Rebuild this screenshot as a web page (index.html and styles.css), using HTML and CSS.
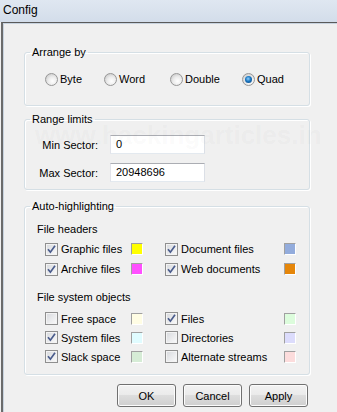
FILE: index.html
```html
<!DOCTYPE html>
<html lang="en">
<head>
  <meta charset="UTF-8" />
  <meta name="viewport" content="width=device-width, initial-scale=1.0"/>
  <title>Config</title>
  <link rel="stylesheet" href="styles.css">
</head>
<body>
  <div class="titlebar">Config</div>
  <div class="client">
    <fieldset class="group">
      <legend>Arrange by</legend>
      <div class="radios">
        <label class="opt"><span class="radio"></span>Byte</label>
        <label class="opt"><span class="radio"></span>Word</label>
        <label class="opt"><span class="radio"></span>Double</label>
        <label class="opt"><span class="radio on"></span>Quad</label>
      </div>
    </fieldset>

    <fieldset class="group range">
      <legend>Range limits</legend>
      <div class="fields">
        <label class="field-label">Min Sector:</label>
        <div class="input">0</div>
        <label class="field-label">Max Sector:</label>
        <div class="input">20948696</div>
      </div>
    </fieldset>

    <fieldset class="group auto">
      <legend>Auto-highlighting</legend>
      <div class="inner">
        <div class="subhead">File headers</div>
        <div class="checks">
          <label class="opt"><span class="cb on"></span>Graphic files</label>
          <span class="swatch" style="background:#ffff00"></span>
          <label class="opt"><span class="cb on"></span>Document files</label>
          <span class="swatch" style="background:#93acdc"></span>
          <label class="opt"><span class="cb on"></span>Archive files</label>
          <span class="swatch" style="background:#ff50ff"></span>
          <label class="opt"><span class="cb on"></span>Web documents</label>
          <span class="swatch" style="background:#e5860a"></span>
        </div>

        <div class="subhead second">File system objects</div>
        <div class="checks fs">
          <label class="opt"><span class="cb"></span>Free space</label>
          <span class="swatch" style="background:#fffde4"></span>
          <label class="opt"><span class="cb on"></span>Files</label>
          <span class="swatch" style="background:#dcfcdc"></span>
          <label class="opt"><span class="cb on"></span>System files</label>
          <span class="swatch" style="background:#e0fcff"></span>
          <label class="opt"><span class="cb"></span>Directories</label>
          <span class="swatch" style="background:#dcdcfc"></span>
          <label class="opt"><span class="cb on"></span>Slack space</label>
          <span class="swatch" style="background:#d6ecd6"></span>
          <label class="opt"><span class="cb"></span>Alternate streams</label>
          <span class="swatch" style="background:#fcdcdc"></span>
        </div>
      </div>
    </fieldset>

    <div class="buttons">
      <button>OK</button>
      <button>Cancel</button>
      <button>Apply</button>
    </div>
  </div>

  <div class="watermark">www.hackingarticles.in</div>
</body>
</html>
```

FILE: styles.css
```css
body {
  margin: 0;
  background-color: #f0f0f0;
  font-family: 'Liberation Sans', Arial, sans-serif;
  font-size: 11px;
  color: #000;
  height: 412px;
  overflow: hidden;
}

.titlebar {
  height: 22px;
  line-height: 21px;
  padding-left: 3px;
  font-size: 12px;
  background: linear-gradient(#dfe7f1, #d3ddea);
}

.client {
  margin-left: 1px;
  border-top: 1px solid #5a5a5a;
  border-left: 2px solid #6b6b6b;
  box-shadow: inset 1px 1px 0 #c8d3df;
  padding-top: 22px;
  height: 367px;
}

.group {
  box-sizing: border-box;
  width: 286px;
  margin: 0 0 0 21px;
  padding: 0;
  border: 1px solid #d5dfe5;
  border-radius: 3px;
  box-shadow: inset 1px 1px 0 #fff, 1px 1px 0 #fff;
}

.group legend {
  margin-left: 5px;
  padding: 0 2px;
  line-height: 14px;
}

.range {
  margin-top: 6px;
}

.auto {
  margin-top: 9px;
}

.opt {
  display: flex;
  align-items: center;
  white-space: nowrap;
}

/* radio buttons */
.radios {
  display: grid;
  grid-template-columns: 59px 66px 72px auto;
  grid-auto-rows: 14px;
  padding: 13px 0 19px 20px;
}

.radio {
  position: relative;
  box-sizing: border-box;
  width: 13px;
  height: 13px;
  margin-right: 2px;
  border: 1px solid #979797;
  border-radius: 50%;
  background: radial-gradient(circle at 60% 65%, #ffffff 0, #ebebeb 45%, #bdbdbd 100%);
}

.radio.on::after {
  content: '';
  position: absolute;
  left: 2px;
  top: 2px;
  width: 7px;
  height: 7px;
  border-radius: 50%;
  background: radial-gradient(circle at 45% 40%, #8fd0ff 0, #1a76c0 45%, #0b3f78 100%);
}

/* range fields */
.fields {
  display: grid;
  grid-template-columns: 57px 95px;
  grid-auto-rows: 19px;
  column-gap: 12px;
  row-gap: 9px;
  align-items: center;
  padding: 9px 0 7px 16px;
}

.field-label {
  justify-self: end;
  white-space: nowrap;
}

.input {
  box-sizing: border-box;
  height: 19px;
  line-height: 17px;
  padding-left: 5px;
  background-color: #fff;
  border: 1px solid;
  border-color: #abadb3 #dbdfe6 #e3e9ef #e2e3ea;
}

/* auto highlighting */
.inner {
  padding: 9px 0 8px 0;
}

.subhead {
  padding-left: 12px;
  line-height: 14px;
}

.subhead.second {
  margin-top: 11px;
}

.checks {
  display: grid;
  grid-template-columns: 86px 34px 119px 12px;
  grid-auto-rows: 20px;
  align-items: center;
  padding-left: 20px;
  margin-top: 3px;
}

.checks.fs {
  grid-auto-rows: 19px;
  margin-top: 5px;
}

.cb {
  box-sizing: border-box;
  width: 13px;
  height: 13px;
  margin-right: 3px;
  border: 1px solid #8f8f8f;
  background: linear-gradient(135deg, #d6d8dc, #fbfbfb);
  box-shadow: inset 0 0 0 1px #f3f3f3;
}

.cb.on {
  background:
    url("data:image/svg+xml;utf8,<svg xmlns='http://www.w3.org/2000/svg' viewBox='0 0 11 11'><path d='M2 5.2 L4.4 8.2 L9 1.8' fill='none' stroke='%234a5c8c' stroke-width='1.7'/></svg>") no-repeat center / 11px 11px,
    linear-gradient(135deg, #d6d8dc, #fbfbfb);
}

.swatch {
  box-sizing: border-box;
  width: 12px;
  height: 12px;
  border: 1px solid;
  border-color: #a0a0a0 #ffffff #ffffff #a0a0a0;
}

/* buttons */
.buttons {
  display: flex;
  justify-content: flex-end;
  gap: 7px;
  width: 286px;
  box-sizing: border-box;
  margin: 9px 0 0 21px;
  padding-right: 2px;
}

.buttons button {
  width: 59px;
  height: 23px;
  padding: 0;
  font-family: inherit;
  font-size: 11px;
  color: #000;
  border: 1px solid #707070;
  border-radius: 3px;
  background: linear-gradient(#f2f2f2 0, #ebebeb 45%, #dddddd 50%, #cfcfcf 100%);
  box-shadow: inset 0 0 0 1px #fcfcfc;
}

.watermark {
  position: absolute;
  left: 35px;
  top: 120px;
  font-size: 26px;
  line-height: 30px;
  font-weight: bold;
  color: rgba(128, 128, 128, 0.05);
  pointer-events: none;
  white-space: nowrap;
}
```
